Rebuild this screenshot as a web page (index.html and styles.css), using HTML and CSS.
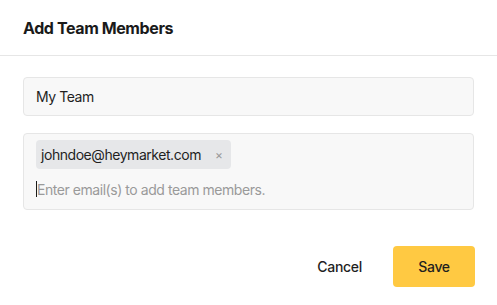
FILE: index.html
```html
<!DOCTYPE html>
<html lang="en">
<head>
    <meta charset="UTF-8">
    <meta name="viewport" content="width=device-width, initial-scale=1.0">
    <title>Add Team Members</title>
    <link rel="stylesheet" href="styles.css">
</head>
<body>
    <div class="modal">
        <header class="modal-header">
            <h1>Add Team Members</h1>
        </header>
        <div class="modal-body">
            <input type="text" class="field" value="My Team">
            <div class="field tags-field">
                <span class="tag">johndoe@heymarket.com <span class="tag-remove">&times;</span></span>
                <div class="tag-input">
                    <span class="caret"></span>
                    <span class="placeholder">Enter email(s) to add team members.</span>
                </div>
            </div>
        </div>
        <footer class="modal-footer">
            <button class="btn btn-link">Cancel</button>
            <button class="btn btn-primary">Save</button>
        </footer>
    </div>
</body>
</html>
```

FILE: styles.css
```css
body {
    margin: 0;
    font-family: Inter, "Noto Sans", Arial, sans-serif;
    color: #1f1f1f;
    background-color: #ffffff;
    letter-spacing: -0.45px;
}

.modal {
    width: 497px;
    height: 305px;
}

.modal-header {
    height: 55px;
    border-bottom: 1px solid #e6e6e6;
    padding: 0 23px;
    display: flex;
    align-items: center;
}

.modal-header h1 {
    margin: 0;
    font-size: 16px;
    font-weight: 700;
    color: #1a1a1a;
    letter-spacing: -0.4px;
}

.modal-body {
    padding: 21px 23px 0 23px;
    display: flex;
    flex-direction: column;
    gap: 17px;
}

.field {
    box-sizing: border-box;
    width: 451px;
    background-color: #f8f8f8;
    border: 1px solid #e6e6e6;
    border-radius: 4px;
    font-family: inherit;
    font-size: 14px;
    letter-spacing: -0.45px;
    color: #1f1f1f;
}

input.field {
    height: 39px;
    padding: 0 12px;
    outline: none;
}

.tags-field {
    height: 77px;
    padding: 6px 12px 0 12px;
}

.tag {
    display: inline-flex;
    align-items: center;
    height: 29px;
    padding: 0 8px 0 5px;
    background-color: #e6e7e9;
    border-radius: 4px;
    font-size: 14px;
    color: #1f1f1f;
}

.tag-remove {
    margin-left: 14px;
    font-size: 12px;
    color: #999;
}

.tag-input {
    display: flex;
    align-items: center;
    height: 20px;
    margin-top: 10px;
}

.caret {
    width: 1px;
    height: 16px;
    background-color: #1a1a1a;
}

.placeholder {
    font-size: 14px;
    color: #9a9a9a;
}

.modal-footer {
    display: flex;
    justify-content: flex-end;
    align-items: center;
    gap: 31px;
    padding: 36px 22px 0 0;
}

.btn {
    font-family: inherit;
    font-size: 14px;
    font-weight: 500;
    letter-spacing: -0.3px;
    color: #1f1f1f;
    border: none;
    cursor: pointer;
}

.btn-link {
    background: none;
    padding: 0;
}

.btn-primary {
    width: 82px;
    height: 41px;
    border-radius: 4px;
    background-color: #ffc942;
}
```
